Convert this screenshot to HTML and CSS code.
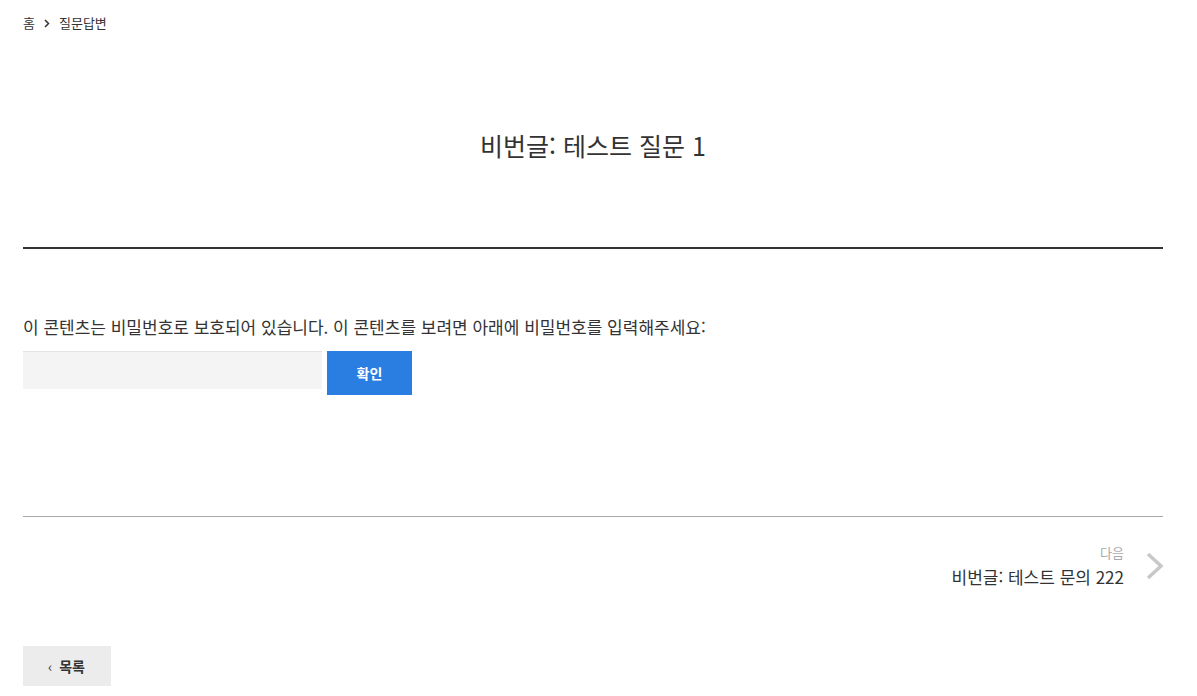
FILE: index.html
```html
<!DOCTYPE html>
<html lang="ko">
<head>
  <meta charset="utf-8">
  <title>비번글: 테스트 질문 1</title>
  <link rel="stylesheet" href="styles.css">
</head>
<body>
  <div class="wrap">
    <nav class="crumbs">
      <a href="#">홈</a>
      <svg class="sep" width="6" height="9" viewBox="0 0 6 9">
        <path d="M1 1 L4.5 4.5 L1 8" fill="none" stroke="#333" stroke-width="1.5"/>
      </svg>
      <a href="#">질문답변</a>
    </nav>

    <h1 class="post-title">비번글: 테스트 질문 1</h1>

    <div class="post-body">
      <p>이 콘텐츠는 비밀번호로 보호되어 있습니다. 이 콘텐츠를 보려면 아래에 비밀번호를 입력해주세요:</p>
      <form class="pw-form">
        <input type="password" name="post_password">
        <button type="submit">확인</button>
      </form>
    </div>

    <div class="post-nav">
      <a class="next" href="#">
        <span class="next-text">
          <span class="label">다음</span>
          <span class="name">비번글: 테스트 문의 222</span>
        </span>
        <svg class="chev" width="20" height="30" viewBox="0 0 20 30">
          <path d="M3 3 L16 15 L3 27" fill="none" stroke="#c8c8c8" stroke-width="3.5"/>
        </svg>
      </a>
    </div>

    <a class="list-btn" href="#"><span class="lt">&lsaquo;</span> 목록</a>
  </div>
</body>
</html>
```

FILE: styles.css
```css
body {
  margin: 0;
  font-family: "Noto Sans CJK KR", "Noto Sans", sans-serif;
  color: #333;
  background: #fff;
}
a { color: inherit; text-decoration: none; }
.wrap {
  width: 1140px;
  margin: 0 0 0 23px;
}
.crumbs {
  font-size: 13px;
  padding-top: 13px;
  line-height: 20px;
  display: flex;
  align-items: center;
  gap: 9px;
}
.post-title {
  text-align: center;
  font-size: 25px;
  font-weight: 400;
  margin: 0;
  padding: 94px 0 84px;
  line-height: 36px;
  border-bottom: 2px solid #333;
}
.post-body {
  padding: 64px 0 121px;
  border-bottom: 1px solid #a8a8a8;
}
.post-body p {
  margin: 0 0 10px;
  font-size: 17px;
  line-height: 28px;
}
.pw-form { display: flex; gap: 5px; align-items: flex-start; }
.pw-form input {
  width: 299px;
  height: 38px;
  box-sizing: border-box;
  border: none;
  border-top: 1px solid #e3e3e3;
  background: #f4f4f4;
}
.pw-form button {
  width: 85px;
  height: 44px;
  border: none;
  background: #2a7de1;
  color: #fff;
  font-family: inherit;
  font-weight: 700;
  font-size: 14px;
  cursor: pointer;
}
.post-nav {
  display: flex;
  justify-content: flex-end;
  padding: 25px 0 56px;
}
.next { display: flex; align-items: center; gap: 21px; }
.next-text { display: flex; flex-direction: column; align-items: flex-end; }
.next .label { font-size: 13px; color: #aaa; line-height: 22px; }
.next .name { font-size: 17px; line-height: 26px; }
.chev { margin-right: -2px; }
.list-btn {
  display: inline-flex;
  align-items: center;
  gap: 7px;
  background: #ececec;
  padding: 0 26px 0 25px;
  height: 40px;
  font-size: 14px;
  font-weight: 700;
}
.list-btn .lt { font-weight: 400; font-size: 14px; }
```
